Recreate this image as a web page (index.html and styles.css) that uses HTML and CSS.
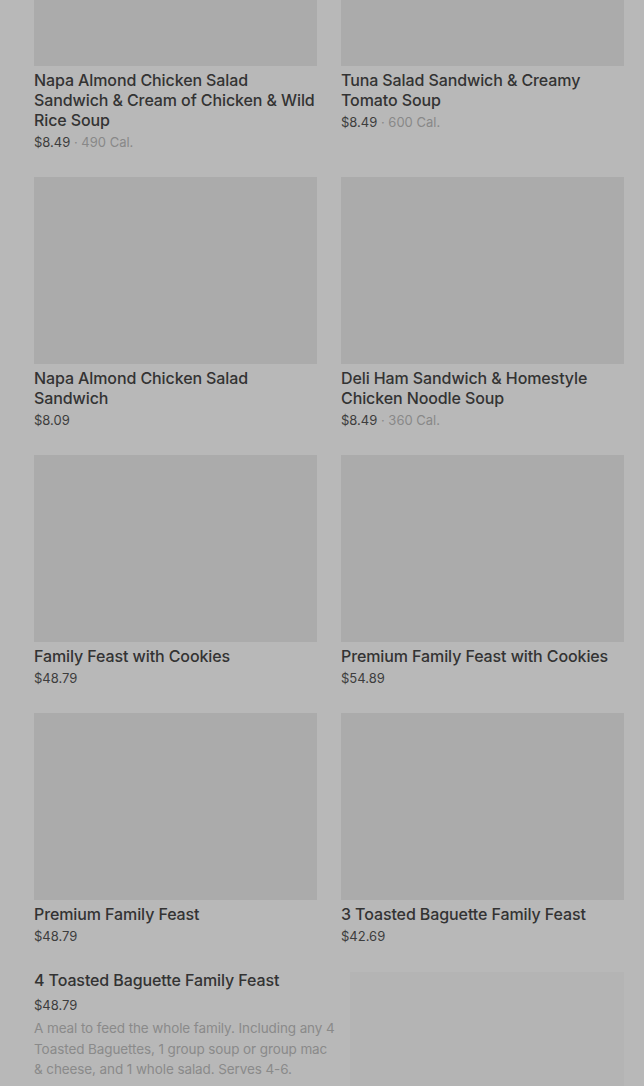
FILE: index.html
```html
<!DOCTYPE html>
<html lang="en">
<head>
<meta charset="utf-8">
<title>Menu</title>
<link rel="stylesheet" href="styles.css">
</head>
<body>
<main class="page">
  <section class="grid">
    <article class="card">
      <div class="thumb"></div>
      <h3 class="name">Napa Almond Chicken Salad Sandwich &amp; Cream of Chicken &amp; Wild Rice Soup</h3>
      <p class="meta"><span class="price">$8.49</span> <span class="cal">· 490 Cal.</span></p>
    </article>
    <article class="card">
      <div class="thumb"></div>
      <h3 class="name">Tuna Salad Sandwich &amp; Creamy Tomato Soup</h3>
      <p class="meta"><span class="price">$8.49</span> <span class="cal">· 600 Cal.</span></p>
    </article>
    <article class="card">
      <div class="thumb"></div>
      <h3 class="name">Napa Almond Chicken Salad Sandwich</h3>
      <p class="meta"><span class="price">$8.09</span></p>
    </article>
    <article class="card">
      <div class="thumb"></div>
      <h3 class="name">Deli Ham Sandwich &amp; Homestyle Chicken Noodle Soup</h3>
      <p class="meta"><span class="price">$8.49</span> <span class="cal">· 360 Cal.</span></p>
    </article>
    <article class="card">
      <div class="thumb"></div>
      <h3 class="name">Family Feast with Cookies</h3>
      <p class="meta"><span class="price">$48.79</span></p>
    </article>
    <article class="card">
      <div class="thumb"></div>
      <h3 class="name">Premium Family Feast with Cookies</h3>
      <p class="meta"><span class="price">$54.89</span></p>
    </article>
    <article class="card">
      <div class="thumb"></div>
      <h3 class="name">Premium Family Feast</h3>
      <p class="meta"><span class="price">$48.79</span></p>
    </article>
    <article class="card">
      <div class="thumb"></div>
      <h3 class="name">3 Toasted Baguette Family Feast</h3>
      <p class="meta"><span class="price">$42.69</span></p>
    </article>
  </section>
  <section class="row-item">
    <div class="row-text">
      <h3 class="name">4 Toasted Baguette Family Feast</h3>
      <p class="meta row-price"><span class="price">$48.79</span></p>
      <p class="desc">A meal to feed the whole family. Including any 4 Toasted Baguettes, 1 group soup or group mac &amp; cheese, and 1 whole salad. Serves 4-6.</p>
    </div>
    <div class="row-thumb"></div>
  </section>
</main>
</body>
</html>
```

FILE: styles.css
```css
* { box-sizing: border-box; }
html, body { margin: 0; padding: 0; }
body {
  background: #b8b8b8;
  font-family: Inter, "Noto Sans", "Liberation Sans", sans-serif;
  color: #333;
  overflow: hidden;
  height: 1086px;
}
.page {
  padding: 0 20px 0 34px;
}
.grid {
  margin-top: -121px;
  display: grid;
  grid-template-columns: 283px 283px;
  column-gap: 24px;
  row-gap: 25px;
}
.card { display: flex; flex-direction: column; }
.thumb {
  height: 187px;
  background: #ababab;
}
.name {
  margin: 4px 0 0;
  font-size: 16px;
  line-height: 20px;
  font-weight: 500;
  letter-spacing: -0.1px;
  color: #333;
}
.meta {
  margin: 2px 0 0;
  font-size: 13px;
  line-height: 20px;
  color: #3d3d3d;
}
.cal { color: #888; }
.row-item {
  margin-top: 24px;
  display: flex;
  gap: 12px;
}
.row-text { flex: 1; }
.row-text .name { margin-top: 0; }
.row-price { margin-top: 5px; }
.desc {
  margin: 3px 0 0;
  font-size: 13.5px;
  line-height: 20.5px;
  letter-spacing: -0.1px;
  color: #8a8a8a;
}
.row-thumb {
  width: 274px;
  height: 160px;
  margin-top: 2px;
  background: #b4b4b4;
}
```
